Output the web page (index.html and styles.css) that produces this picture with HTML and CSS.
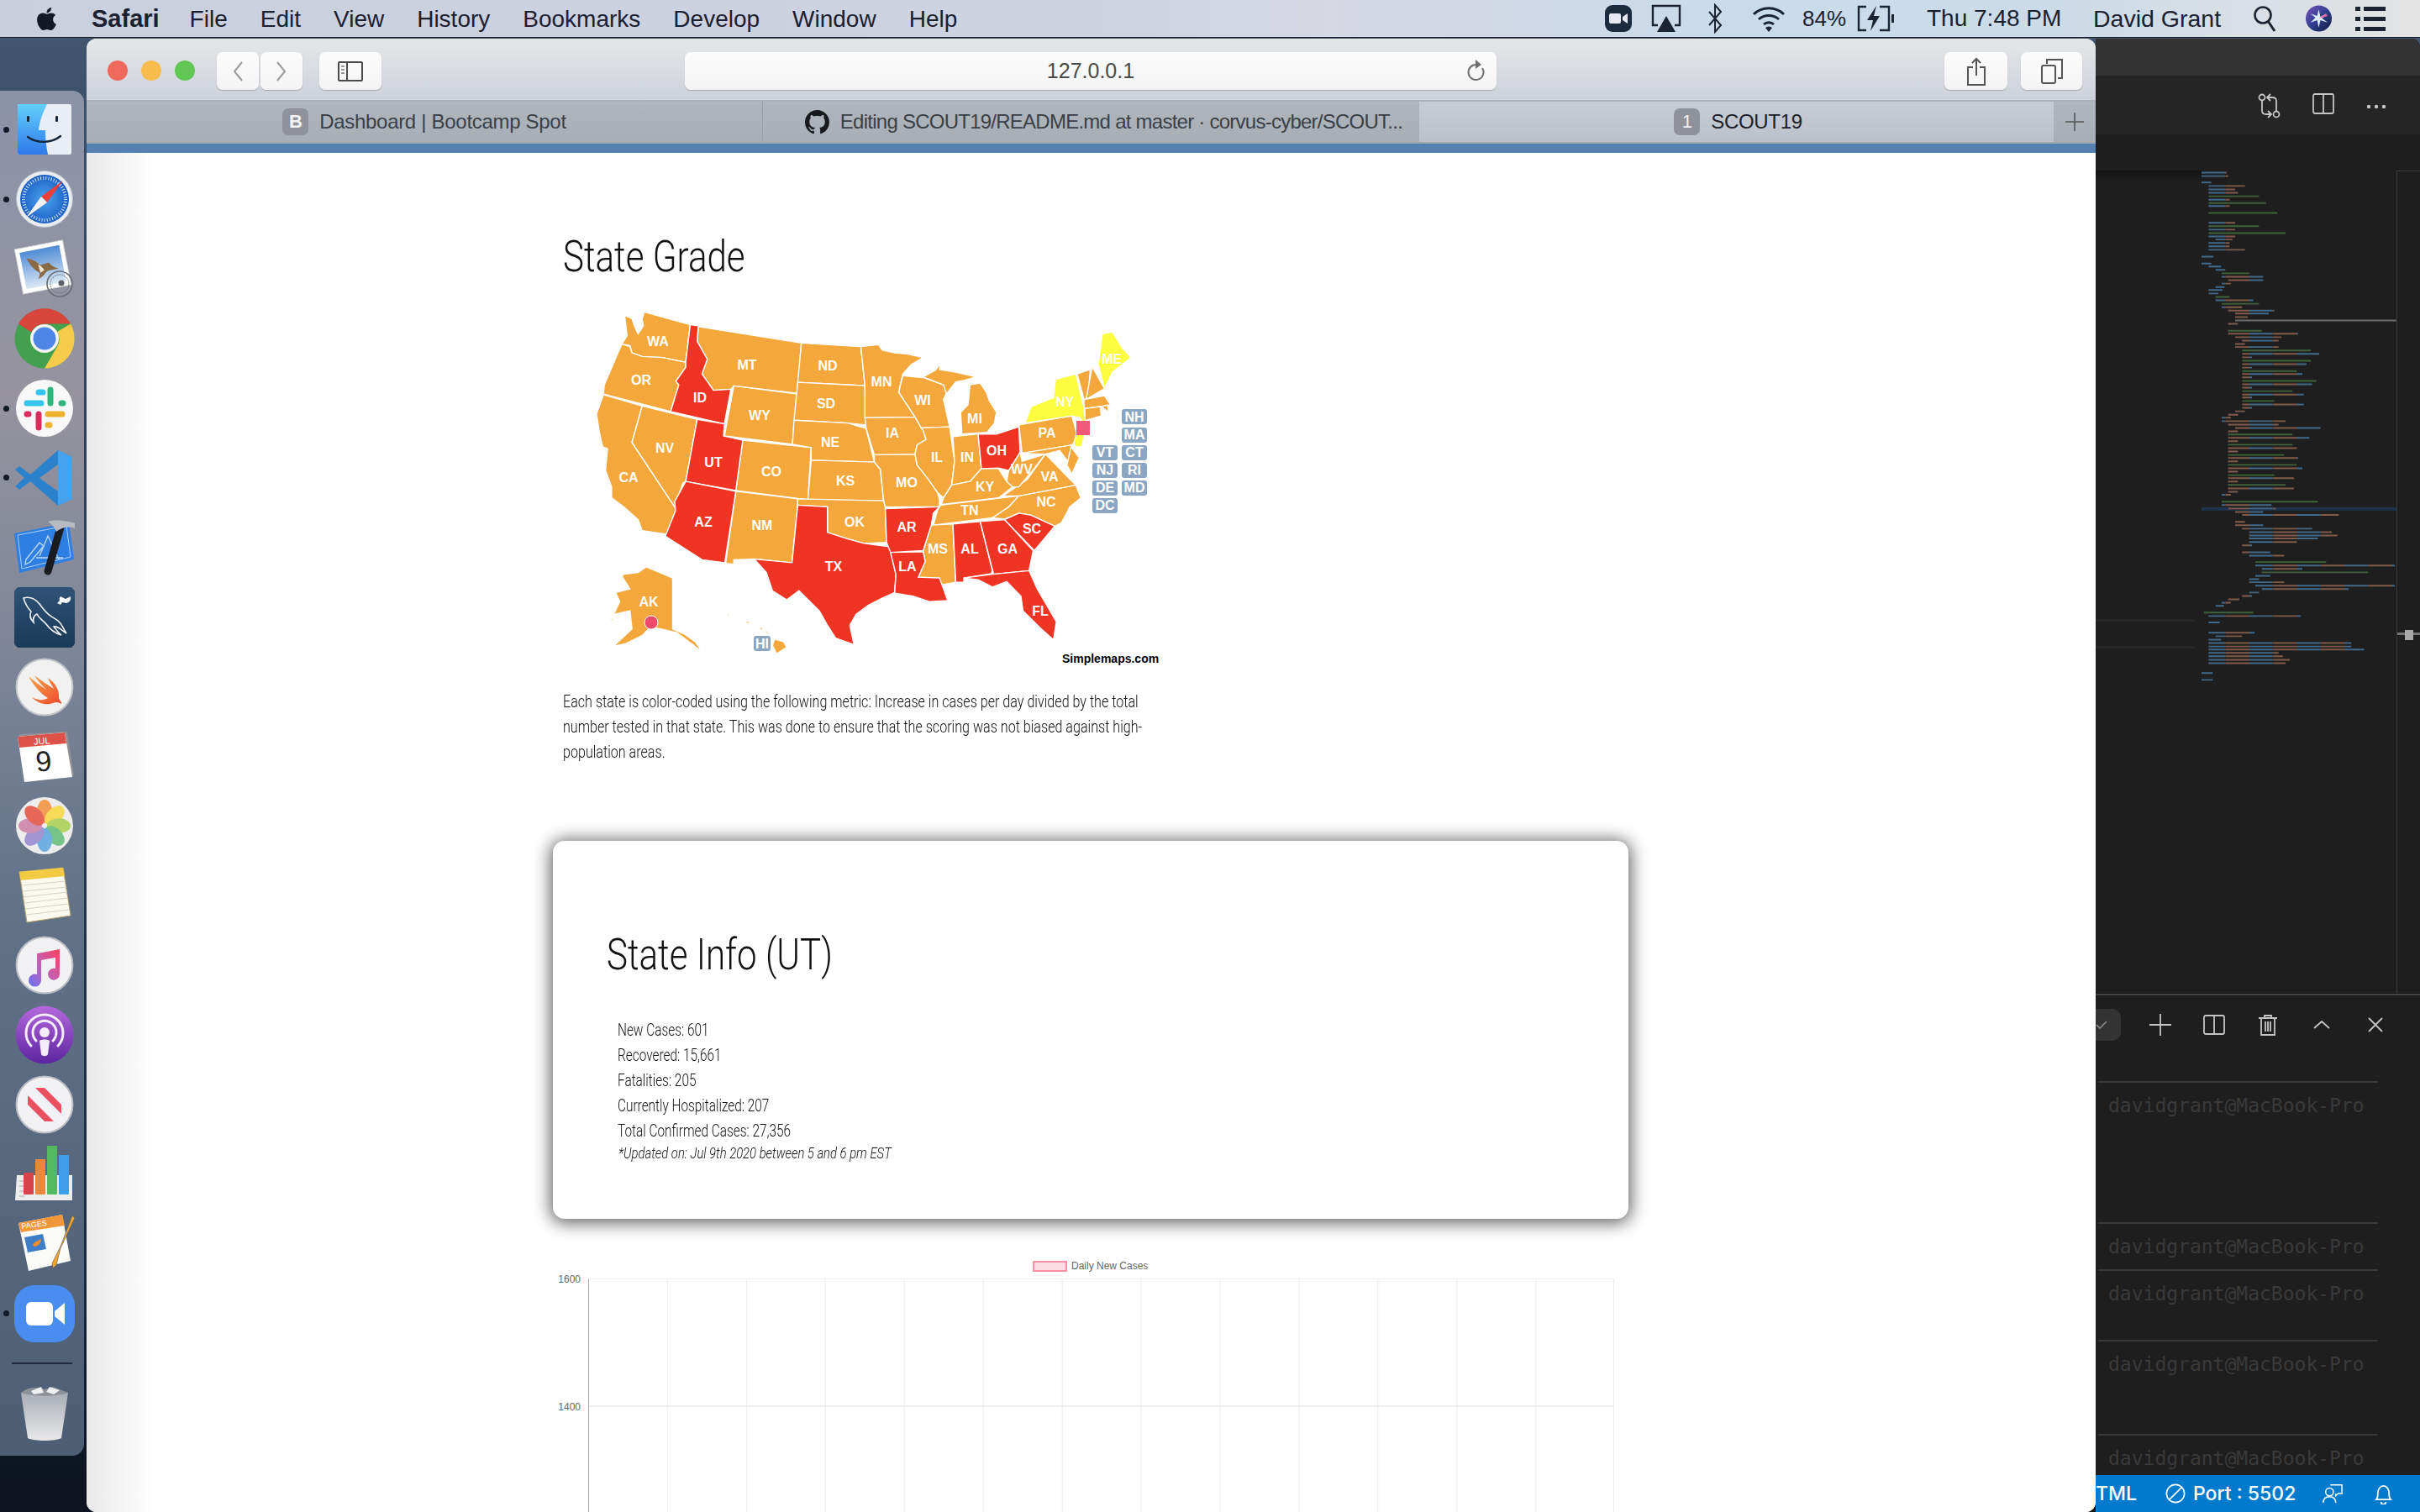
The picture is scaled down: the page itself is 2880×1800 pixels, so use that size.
FILE: index.html
```html
<!DOCTYPE html>
<html lang="en">
<head>
<meta charset="utf-8">
<title>SCOUT19</title>
<link rel="stylesheet" href="styles.css">
</head>
<body>
<header class="menubar">
  <svg class="apple" viewBox="3 3 18 18"><path d="M17.05 20.28c-.98.95-2.05.8-3.08.35-1.09-.46-2.09-.48-3.24 0-1.44.62-2.2.44-3.06-.35C2.79 15.25 3.51 7.59 9.05 7.31c1.35.07 2.29.74 3.08.8 1.18-.24 2.31-.93 3.57-.84 1.51.12 2.65.72 3.4 1.8-3.12 1.87-2.38 5.98.48 7.13-.57 1.5-1.31 2.99-2.54 4.09zM12.03 7.25c-.15-2.23 1.66-4.07 3.74-4.25.29 2.58-2.34 4.5-3.74 4.25z"/></svg>
  <nav class="menus"><b>Safari</b><span>File</span><span>Edit</span><span>View</span><span>History</span><span>Bookmarks</span><span>Develop</span><span>Window</span><span>Help</span></nav>
  <div class="status">
    <svg class="st-zoom" viewBox="0 0 32 32"><rect width="32" height="32" rx="9" fill="#1c2b3d"/><rect x="5" y="10" width="14" height="12" rx="2" fill="#e6eaf0"/><path d="M21 14l6-4v12l-6-4z" fill="#e6eaf0"/></svg>
    <svg class="st-air" viewBox="0 0 36 34"><path d="M8 25H2V2h32v23h-6" fill="none" stroke="#1b2433" stroke-width="2.4"/><path d="M18 14l11 19H7z" fill="#1b2433"/></svg>
    <svg class="st-bt" viewBox="0 0 20 36"><path d="M3 10l14 16-7 8V2l7 8L3 26" fill="none" stroke="#1b2433" stroke-width="2"/></svg>
    <svg class="st-wifi" viewBox="0 0 42 34"><g fill="none" stroke="#1b2433" stroke-width="3"><path d="M3 12a26 26 0 0 1 36 0"/><path d="M9 18a18 18 0 0 1 24 0"/><path d="M15 24a9 9 0 0 1 12 0"/></g><path d="M21 33l-4-5a6 6 0 0 1 8 0z" fill="#1b2433"/></svg>
    <span class="st-pct">84%</span>
    <svg class="st-bat" viewBox="0 0 46 32"><path d="M12 2H3v28h9M28 2h11v28H28" fill="none" stroke="#1b2433" stroke-width="2.4"/><rect x="42" y="11" width="3" height="10" fill="#1b2433"/><path d="M24 1L13 18h7l-3 13 11-18h-7z" fill="#1b2433"/></svg>
    <span class="st-time">Thu 7:48 PM</span>
    <span class="st-user">David Grant</span>
    <svg class="st-search" viewBox="0 0 28 32"><circle cx="12" cy="12" r="9.500" fill="none" stroke="#1b2433" stroke-width="2.6"/><path d="M18 19l8 12" stroke="#1b2433" stroke-width="3"/></svg>
    <svg class="st-siri" viewBox="0 0 32 32"><defs><linearGradient id="siriG" x1="0" y1="0" x2="1" y2="1"><stop offset="0" stop-color="#7c4fc0"/><stop offset=".5" stop-color="#2f3f8e"/><stop offset="1" stop-color="#111a3a"/></linearGradient></defs><circle cx="16" cy="16" r="16" fill="url(#siriG)"/><path d="M16 5l2 9 8-4-6 6 7 5-9-3-2 9-2-9-8 3 6-6-6-5 8 3z" fill="#dff0ff"/><path d="M16 16l8-6 3 3z" fill="#ef6aa8"/></svg>
    <svg class="st-list" viewBox="0 0 36 30"><g fill="#1b2433"><rect x="0" y="1" width="6" height="5"/><rect x="10" y="1" width="26" height="5"/><rect x="0" y="13" width="6" height="5"/><rect x="10" y="13" width="26" height="5"/><rect x="0" y="25" width="6" height="5"/><rect x="10" y="25" width="26" height="5"/></g></svg>
  </div>
</header>

<aside class="dock">
  <div class="dock-item running"><svg viewBox="0 0 72 72"><defs><linearGradient id="fb" x1="0" y1="0" x2="0" y2="1"><stop offset="0" stop-color="#63d0fb"/><stop offset="1" stop-color="#2f78ea"/></linearGradient></defs><rect x="4" y="6" width="64" height="60" rx="2" fill="#e8eef4"/><path d="M6 6h33c-5 10-9 20-10 31h8c0 10 1 20 3 29H6a2 2 0 0 1-2-2V8a2 2 0 0 1 2-2z" fill="url(#fb)"/><rect x="15" y="20" width="3" height="7" rx="1" fill="#14263a"/><rect x="49" y="20" width="3" height="7" rx="1" fill="#14263a"/><path d="M16 45c11 8 28 8 39-1" fill="none" stroke="#14263a" stroke-width="2.4" stroke-linecap="round"/></svg></div>
  <div class="dock-item running"><svg viewBox="0 0 72 72"><defs><radialGradient id="sb"><stop offset="0" stop-color="#4ba4ee"/><stop offset="1" stop-color="#1c5fc6"/></radialGradient></defs><circle cx="36" cy="36" r="33.500" fill="#e9edf1" stroke="#b9bec6"/><circle cx="36" cy="36" r="29" fill="url(#sb)"/><circle cx="36" cy="36" r="25" fill="none" stroke="#d5e6f8" stroke-width="4" stroke-dasharray="1 2.2"/><path d="M58 14L32 33l7 7z" fill="#ee3f3a"/><path d="M14 58l18-25 7 7z" fill="#f3f3f3"/></svg></div>
  <div class="dock-item"><svg viewBox="0 0 72 72"><defs><linearGradient id="ms" x1="0" y1="0" x2="0" y2="1"><stop offset="0" stop-color="#4f8bd6"/><stop offset="1" stop-color="#dbe8f4"/></linearGradient></defs><g transform="rotate(-11 34 34)"><rect x="5" y="7" width="58" height="54" fill="#fff" stroke="#ddd" stroke-dasharray="3 1"/><rect x="10" y="12" width="48" height="44" fill="url(#ms)"/><path d="M17 20c6 2 11 6 14 11l11-1c2 4 5 7 10 9-7 1-13-1-16 2-3 3-6 5-10 6 2-3 3-5 3-7-5-4-10-11-12-20z" fill="#8a6a44"/><path d="M29 30c3 2 5 5 6 8l-5 2z" fill="#efe6d2"/></g><circle cx="54" cy="54" r="15" fill="none" stroke="#6a6d74" stroke-width="1.600"/><circle cx="54" cy="54" r="11" fill="none" stroke="#6a6d74" stroke-width="1" stroke-dasharray="2 1"/><circle cx="56" cy="53" r="3.500" fill="#5f6168"/></svg></div>
  <div class="dock-item"><svg viewBox="0 0 72 72"><circle cx="36" cy="36" r="35.500" fill="#43a04f"/><path d="M67 18.500A35.500 35.500 0 0 1 36 71.500L52 44a18 18 0 0 0-1-16z" fill="#f8cc4b"/><path d="M5 18.500A35.500 35.500 0 0 1 67 18.500H36a18 18 0 0 0-16 10z" fill="#d8453a"/><circle cx="36" cy="36" r="17" fill="#f5f5f5"/><circle cx="36" cy="36" r="13.500" fill="#4e86e8"/></svg></div>
  <div class="dock-item running"><svg viewBox="0 0 72 72"><circle cx="36" cy="36" r="34" fill="#f8f8f8"/><g stroke-linecap="round" stroke-width="7" fill="none"><path d="M29 17h5M15 30h17" stroke="#36c5f0"/><path d="M43 14v16M56 30h2" stroke="#2eb67d"/><path d="M40 43h17M40 56h2" stroke="#ecb22e"/><path d="M29 43v16M15 43h2" stroke="#d92d5c"/></g></svg></div>
  <div class="dock-item running"><svg viewBox="0 0 72 72"><path fill-rule="evenodd" d="M52 3L19 32 6 22 1 26l11 10L1 46l5 4 13-10 33 29 17-8V11zM52 20L30 36l22 16z" fill="#2a82cd"/><path d="M52 3l17 8v50l-17 8z" fill="#45a2ee"/></svg></div>
  <div class="dock-item"><svg viewBox="0 0 72 72"><path d="M0 19L65 6l6 44L6 66z" fill="#2f7fe3"/><path d="M4 21l58-11 5 37L9 61z" fill="none" stroke="#a8cef7" stroke-width="1"/><g fill="none" stroke="#bfdcfb" stroke-width="1.300"><path d="M14 50l16-20 5 4-16 19-6 3z"/><path d="M30 46l10-24 13 28M26 48h32"/></g><path d="M55 12L40 64" stroke="#1a1c20" stroke-width="9" stroke-linecap="round"/><path d="M40 5C50 2 62 4 73 7l-1 6C64 10 56 12 50 17 48 12 45 8 40 5z" fill="#b8bcc2"/></svg></div>
  <div class="dock-item"><svg viewBox="0 0 72 72"><defs><linearGradient id="my" x1="0" y1="0" x2="0" y2="1"><stop offset="0" stop-color="#2f5377"/><stop offset="1" stop-color="#1b3857"/></linearGradient></defs><rect x="-1" y="-2" width="74" height="76" rx="12" fill="url(#my)"/><path d="M11 13c7-2 14 1 19 7 4 5 7 10 13 14 3 3 8 4 11 8 3 3 4 7 8 13-6-4-10-9-15-8 4 5 6 8 9 10-7-2-13-6-18-13-4-5-8-6-11-12-4 2-5 6-4 10-4-4-5-9-3-13-3-3-6-6-9-16z" fill="none" stroke="#f0f4f8" stroke-width="1.600"/><path d="M55 11l6 3 6-3c1 4-1 7-5 8l-5-1-2 3-4-2 3-3c-1-2 0-4 1-5z" fill="#f3f5f7"/></svg></div>
  <div class="dock-item"><svg viewBox="0 0 72 72"><defs><linearGradient id="sw" x1="0" y1="0" x2="1" y2="1"><stop offset="0" stop-color="#f7a44b"/><stop offset="1" stop-color="#ef4b2d"/></linearGradient></defs><circle cx="36" cy="36" r="33.500" fill="#f1f1f1" stroke="#bfc2c7" stroke-width="2"/><path d="M17 23c8 7 15 12 21 16-6-6-11-12-14-17 9 7 17 12 23 16-3-5-5-8-7-13 9 6 14 15 13 24 2 4 4 6 3 7-3-2-6-3-10-1-7 3-18 1-25-7 7 4 14 4 19 1-8-5-16-13-23-26z" fill="url(#sw)"/></svg></div>
  <div class="dock-item"><svg viewBox="0 0 72 72"><path d="M6 10l57-3 8 52-57 8z" fill="#8f9196"/><path d="M4 13l56-5 9 53-57 6z" fill="#fff"/><path d="M4 13l56-5 2 13-56 5z" fill="#dc5249"/><text class="cal-mon" x="33" y="22" transform="rotate(-5 33 22)">JUL</text><text class="cal-day" x="36" y="54" transform="rotate(-5 36 54)">9</text></svg></div>
  <div class="dock-item"><svg viewBox="0 0 72 72"><circle cx="36" cy="36" r="34" fill="#ededed"/><g opacity=".85"><ellipse cx="36" cy="19" rx="9" ry="14" fill="#f4913a"/><ellipse cx="48" cy="24" rx="9" ry="14" fill="#f7d83c" transform="rotate(45 48 24)"/><ellipse cx="53" cy="36" rx="14" ry="9" fill="#a9cf4e"/><ellipse cx="48" cy="48" rx="9" ry="14" fill="#62bd76" transform="rotate(-45 48 48)"/><ellipse cx="36" cy="53" rx="9" ry="14" fill="#5aa5df"/><ellipse cx="24" cy="48" rx="9" ry="14" fill="#9586cf" transform="rotate(45 24 48)"/><ellipse cx="19" cy="36" rx="14" ry="9" fill="#cd7fa9"/><ellipse cx="24" cy="24" rx="9" ry="14" fill="#e5503d" transform="rotate(-45 24 24)"/></g></svg></div>
  <div class="dock-item"><svg viewBox="0 0 72 72"><path d="M6 8l52-5 9 57-52 8z" fill="#fbfaf0" stroke="#b9a56a"/><path d="M6 8l52-5 2 10-52 5z" fill="#f3cb43"/><g stroke="#d6d3c3" stroke-width="1"><path d="M9 24l52-5M10 31l52-5M11 38l52-6M12 45l52-6M13 52l52-6M14 59l52-6"/></g></svg></div>
  <div class="dock-item"><svg viewBox="0 0 72 72"><defs><linearGradient id="mu" x1="1" y1="0" x2="0" y2="1"><stop offset="0" stop-color="#f5435c"/><stop offset=".5" stop-color="#c65fb3"/><stop offset="1" stop-color="#6672f2"/></linearGradient></defs><circle cx="36" cy="36" r="33.500" fill="#f2f2f4" stroke="#b8bcc2" stroke-width="2"/><path d="M28 22l26-5v30a7 7 0 1 1-5-7V27l-17 3v24a7.500 7.500 0 1 1-5-7V22z" fill="url(#mu)"/></svg></div>
  <div class="dock-item"><svg viewBox="0 0 72 72"><defs><linearGradient id="po" x1="0" y1="0" x2="0" y2="1"><stop offset="0" stop-color="#b568dd"/><stop offset="1" stop-color="#5b25a0"/></linearGradient></defs><circle cx="36" cy="36" r="34.500" fill="url(#po)"/><g fill="none" stroke="#f4ecfa" stroke-width="3" stroke-linecap="round"><path d="M20 49a22 22 0 1 1 32 0"/><path d="M26 43a14 14 0 1 1 20 0"/></g><circle cx="36" cy="33" r="6" fill="#f4ecfa"/><path d="M30 43c2-2 10-2 12 0l-2 16c-1 3-7 3-8 0z" fill="#f4ecfa"/></svg></div>
  <div class="dock-item"><svg viewBox="0 0 72 72"><circle cx="36" cy="36" r="33.500" fill="#f2f2f4" stroke="#b8bcc2" stroke-width="2"/><rect x="16" y="16" width="40" height="40" rx="1" fill="#ea5062"/><path d="M16 16h9l31 31v9h-9L16 25zM16 36l20 20H16zM36 16h20v20z" fill="#f2f2f4"/><path d="M16 16h8l32 32v8z" fill="#f2f2f4" opacity="0"/></svg></div>
  <div class="dock-item"><svg viewBox="0 0 72 72"><path d="M3 37h66v30H1z" fill="#eceeed"/><g stroke="#aaa" stroke-width="1"><path d="M6 44h6M6 50h6M6 56h6M6 62h6"/></g><rect x="11" y="34" width="12" height="26" rx="1" fill="#d9434c"/><rect x="25" y="18" width="12" height="42" rx="1" fill="#e9873b"/><rect x="39" y="2" width="12" height="58" rx="1" fill="#53b95f"/><rect x="53" y="13" width="12" height="47" rx="1" fill="#3f9ce9"/></svg></div>
  <div class="dock-item"><svg viewBox="0 0 72 72"><path d="M5 11L57 1l10 55-50 12z" fill="#fbfbf8"/><path d="M5 11L57 1l3 13-52 8z" fill="#f0973a"/><text class="pages-tag" x="9" y="18" transform="rotate(-8 9 18)">PAGES</text><path d="M12 28l22-4 4 18-22 4z" fill="#3d7ec6"/><path d="M22 37c3-5 7-5 10-7 0 4-2 8-8 9z" fill="#f08b2c"/><path d="M69 2l3 3-17 36-5 20-4 4-1-6 10-20z" fill="#f1a52d" stroke="#555" stroke-width=".6"/></svg></div>
  <div class="dock-item running"><svg viewBox="0 0 72 72"><rect width="72" height="68" y="2" rx="24" fill="#4a8df0"/><rect x="14" y="22" width="32" height="28" rx="6" fill="#fff"/><path d="M48 33l12-10v26L48 39z" fill="#fff"/></svg></div>
  <div class="dock-sep"></div>
  <div class="dock-item"><svg viewBox="0 0 72 72"><defs><linearGradient id="tr" x1="0" y1="0" x2="0" y2="1"><stop offset="0" stop-color="#a9aeb5"/><stop offset="1" stop-color="#e9e9ea"/></linearGradient></defs><path d="M8 12h56l-8 54c-7 4-33 4-40 0z" fill="url(#tr)"/><path d="M8 12c6-5 14-7 22-6l6 2 10-3 18 7c-15 5-41 5-56 0z" fill="#8d9096"/><path d="M20 10l12-5 3 7-12 2zM42 5l12 4-7 5-9-3z" fill="#eef0f2"/></svg></div>
</aside>

<section class="vscode">
  <div class="vs-title"></div>
  <div class="vs-tabs">
    <svg class="vs-ic" viewBox="0 0 28 30"><g fill="none" stroke="#c5c5c5" stroke-width="1.800"><circle cx="5" cy="5" r="3.500"/><circle cx="22" cy="25" r="3.500"/><path d="M5 9v12c0 3 2 4 5 4h5M12 21l4 4-4 4M22 21V9c0-3-2-4-5-4h-5M15 1l-4 4 4 4"/></g></svg>
    <svg class="vs-ic2" viewBox="0 0 26 25"><rect x="1" y="1" width="24" height="23" rx="2" fill="none" stroke="#c5c5c5" stroke-width="1.800"/><path d="M13 1v23" stroke="#c5c5c5" stroke-width="1.800"/></svg>
    <svg class="vs-ic3" viewBox="0 0 24 6"><g fill="#c5c5c5"><circle cx="3" cy="3" r="2.200"/><circle cx="12" cy="3" r="2.200"/><circle cx="21" cy="3" r="2.200"/></g></svg>
  </div>
  <div class="vs-editor">
    <div class="vs-gutter"><div class="vs-rule rule-a"></div><div class="vs-rule rule-b"></div></div>
    <svg class="vs-mini" viewBox="420 300 696 1200" preserveAspectRatio="none">
      <defs><pattern id="code" x="420" y="0" width="170" height="10" patternUnits="userSpaceOnUse"><rect width="85" height="10" fill="#4f86b4"/><rect x="85" width="85" height="10" fill="#a8725c"/></pattern></defs>
      <rect x="420" y="1086" width="696" height="8" fill="#1f3a5c"/>
      <path stroke="url(#code)" stroke-width="3.800" fill="none" d="M420 305h90M420 313h95M420 328h35M445 336h130M445 344h95M445 352h105M445 368h75M445 383h75M445 422h95M445 438h95M445 454h95M470 461h60M445 469h75M445 477h75M445 485h130M420 501h42M420 517h35M445 524h45M470 532h35M492 548h148M515 556h125M492 564h33M470 572h32M445 579h50M445 587h35M470 603h135M492 619h73M515 627h165M540 634h120M540 642h45M515 658h35M515 681h250M540 689h165M565 697h130M540 705h35M540 712h155M565 728h275M565 736h35M565 752h230M565 760h35M565 775h215M565 783h35M565 799h250M565 807h35M565 823h220M565 830h35M565 846h220M565 854h35M540 862h35M515 870h35M492 877h33M492 885h228M515 893h180M540 901h305M515 909h35M515 924h290M515 932h35M515 948h245M515 956h35M515 971h250M515 979h35M515 995h265M515 1003h35M515 1018h235M515 1026h35M515 1042h235M515 1050h35M492 1057h33M492 1081h178M515 1089h170M540 1097h100M565 1104h345M540 1120h35M540 1128h100M565 1136h250M590 1144h295M590 1152h315M590 1159h245M590 1167h170M565 1175h35M565 1191h100M590 1199h125M612 1222h498M635 1230h145M612 1246h53M590 1254h35M590 1261h125M612 1269h498M635 1277h310M590 1285h35M565 1293h35M515 1301h40M492 1309h33M470 1316h30M445 1340h330M445 1355h40M445 1379h165M470 1387h95M445 1395h45M445 1403h510M445 1411h510M445 1418h555M445 1426h250M445 1434h265M445 1442h290M445 1450h275M420 1473h40M420 1489h40"/>
      <path stroke="#8a8a8a" stroke-width="3.800" fill="none" d="M540 650h575"/>
      <path stroke="#4e7d45" stroke-width="3.800" fill="none" d="M445 360h180M445 376h205M445 399h245M445 430h180M445 446h275M492 540h98M470 595h50M492 611h133M515 674h120M565 720h245M565 744h245M565 768h195M565 791h265M565 815h180M565 838h115M515 916h230M515 940h230M515 964h200M515 987h245M515 1011h165M515 1034h205M492 1073h343M612 1214h253M635 1238h380M428 1332h177"/>
    </svg>
    <div class="vs-scroll"><div class="vs-mark"><span class="vs-thumb"></span></div></div>
  </div>
  <div class="vs-term">
    <div class="term-head">
      <div class="term-select"><svg viewBox="0 0 14 10"><path d="M1 5l4 4 8-8" fill="none" stroke="#8a8a8a" stroke-width="1.600"/></svg></div>
      <svg class="term-ic" viewBox="0 0 28 28"><path d="M14 1v26M1 14h26" stroke="#c5c5c5" stroke-width="1.800"/></svg>
      <svg class="term-ic" viewBox="0 0 28 28"><rect x="2" y="3" width="24" height="22" rx="2" fill="none" stroke="#c5c5c5" stroke-width="1.800"/><path d="M14 3v22" stroke="#c5c5c5" stroke-width="1.800"/></svg>
      <svg class="term-ic" viewBox="0 0 28 28"><path d="M3 6h22M10 6V3h8v3M6 6v20h16V6M11 10v12M14 10v12M17 10v12" fill="none" stroke="#c5c5c5" stroke-width="1.800"/></svg>
      <svg class="term-ic" viewBox="0 0 28 28"><path d="M5 18l9-8 9 8" fill="none" stroke="#c5c5c5" stroke-width="1.800"/></svg>
      <svg class="term-ic" viewBox="0 0 28 28"><path d="M6 6l16 16M22 6L6 22" fill="none" stroke="#c5c5c5" stroke-width="1.800"/></svg>
    </div>
<pre class="term-text"><span class="rule">────────────────────────</span>
davidgrant@MacBook-Pro




<span class="rule">────────────────────────</span>
davidgrant@MacBook-Pro
<span class="rule">────────────────────────</span>
davidgrant@MacBook-Pro

<span class="rule">────────────────────────</span>
davidgrant@MacBook-Pro


<span class="rule">────────────────────────</span>
davidgrant@MacBook-Pro</pre>
  </div>
  <footer class="vs-status">
    <span class="vs-lang">TML</span>
    <svg class="vs-no" viewBox="0 0 26 26"><circle cx="13" cy="13" r="11.500" fill="none" stroke="#fff" stroke-width="1.800"/><path d="M5 21L21 5" stroke="#fff" stroke-width="1.800"/></svg>
    <span class="vs-port">Port : 5502</span>
    <svg class="vs-fb" viewBox="0 0 26 26"><g fill="none" stroke="#fff" stroke-width="1.600"><circle cx="9" cy="11" r="5"/><path d="M1 25c0-5 3-8 8-8s8 3 8 8M10 2h15v11h-5l-3 3v-3"/></g></svg>
    <svg class="vs-bell" viewBox="0 0 22 26"><path d="M2 20c2-2 2-4 2-8 0-5 3-9 7-9s7 4 7 9c0 4 0 6 2 8zM8 23a3 3 0 0 0 6 0" fill="none" stroke="#fff" stroke-width="1.800"/></svg>
  </footer>
</section>

<main class="safari">
  <div class="toolbar">
    <span class="light red"></span><span class="light yellow"></span><span class="light green"></span>
    <div class="btn nav-back"><svg viewBox="0 0 14 26"><path d="M12 2L3 13l9 11" fill="none" stroke="#9a9a9a" stroke-width="2"/></svg></div>
    <div class="btn nav-fwd"><svg viewBox="0 0 14 26"><path d="M2 2l9 11-9 11" fill="none" stroke="#9a9a9a" stroke-width="2"/></svg></div>
    <div class="btn side"><svg viewBox="0 0 30 24"><rect x="1" y="1" width="28" height="22" rx="1" fill="none" stroke="#4a4a4a" stroke-width="2"/><path d="M11 1v22" stroke="#4a4a4a" stroke-width="2"/><path d="M4 6h4M4 10h4M4 14h4" stroke="#777" stroke-width="1.600"/></svg></div>
    <div class="url"><span>127.0.0.1</span><svg viewBox="0 0 24 28"><path d="M19 11a9 9 0 1 1-7-4" fill="none" stroke="#707070" stroke-width="2"/><path d="M11 1l7 6-7 5z" fill="#707070"/></svg></div>
    <div class="btn share"><svg viewBox="0 0 24 34"><path d="M8 12H2v21h20V12h-6M12 22V2M7 7l5-5 5 5" fill="none" stroke="#555" stroke-width="2"/></svg></div>
    <div class="btn tabsbtn"><svg viewBox="0 0 28 30"><path d="M8 6V1h18v22h-5" fill="none" stroke="#555" stroke-width="2"/><rect x="2" y="8" width="16" height="21" rx="2" fill="none" stroke="#555" stroke-width="2"/></svg></div>
  </div>
  <div class="tabs">
    <div class="tab"><span class="fav">B</span><span>Dashboard | Bootcamp Spot</span></div>
    <div class="tab tab-mid"><svg class="gh" viewBox="0 0 16 16"><path d="M8 0C3.580 0 0 3.580 0 8c0 3.540 2.290 6.530 5.470 7.590.4.070.55-.17.55-.38 0-.19-.01-.82-.01-1.490-2.010.37-2.530-.49-2.690-.94-.09-.23-.48-.94-.82-1.130-.28-.15-.68-.52-.01-.53.63-.01 1.080.58 1.230.82.72 1.210 1.870.87 2.330.66.07-.52.28-.87.51-1.070-1.780-.2-3.640-.89-3.640-3.950 0-.87.31-1.590.82-2.150-.08-.2-.36-1.020.08-2.120 0 0 .67-.21 2.200.82.64-.18 1.320-.27 2-.27.68 0 1.360.09 2 .27 1.530-1.040 2.200-.82 2.200-.82.44 1.100.16 1.920.08 2.120.51.56.82 1.270.82 2.150 0 3.070-1.870 3.750-3.650 3.950.29.25.54.73.54 1.480 0 1.070-.01 1.930-.01 2.200 0 .21.15.46.55.38A8.013 8.013 0 0 0 16 8c0-4.420-3.580-8-8-8z"/></svg><span>Editing SCOUT19/README.md at master · corvus-cyber/SCOUT...</span></div>
    <div class="tab tab-active"><span class="fav">1</span><span>SCOUT19</span></div>
    <div class="tab tab-plus"><svg viewBox="0 0 22 22"><path d="M11 0v22M0 11h22" stroke="#555" stroke-width="1.600"/></svg></div>
  </div>
  <div class="tabline"></div>
  <div class="page">
    <section class="grade">
      <h2 class="cond title">State Grade</h2>
      <svg class="map" viewBox="40 120 700 440">
        <g transform="scale(.4847 .4337)" class="states">
          <g class="or">
            <path d="M172 290L190 298 196 318 205 340 218 318 215 300 220 280 333 315 322 418 265 405 215 402 190 392 185 372 165 368 178 345z"/>
            <path d="M165 368L185 375 190 392 215 402 265 405 322 418 322 432 298 470 305 480 285 553 120 505 122 480 145 420z"/>
            <path d="M120 507L215 538 190 638 295 815 297 825 275 890 215 880 205 850 170 815 140 790 140 760 125 715 130 655 118 650 110 610 103 560z"/>
            <path d="M215 538L350 575 322 745 315 750 295 815 190 638z"/>
            <path d="M353 320L606 365 597 503 440 483 433 492 390 495 362 450 375 410 350 360z"/>
            <path d="M440 483L595 505 584 643 417 620z"/>
            <path d="M462 632L630 652 622 795 445 770z"/>
            <path d="M445 772L597 793 597 810 583 968 490 958 440 960 440 972 420 970z"/>
            <path d="M606 365L752 375 762 482 597 473z"/>
            <path d="M597 473L762 482 765 590 720 585 588 577z"/>
            <path d="M588 577L720 585 765 600 785 692 630 687 630 652 584 643z"/>
            <path d="M630 687L785 692 800 712 808 798 622 795z"/>
            <path d="M597 793L808 798 812 815 815 912 760 915 720 903 670 885 670 815 597 810z"/>
            <path d="M785 672L885 670 890 700 915 735 940 775 945 795 945 815 812 815 808 798 800 712 785 692z"/>
            <path d="M762 570L885 568 905 605 912 630 890 645 885 670 785 672 765 600z"/>
            <path d="M752 375L795 370 805 385 835 392 865 395 905 405 875 425 855 450 845 500 885 568 762 570 762 482z"/>
            <path d="M855 455L905 460 955 480 975 470 955 520 970 595 900 598 885 568 845 500z"/>
            <path d="M900 598L970 595 982 690 975 755 955 790 940 775 915 735 890 700 885 670 890 645 912 630 905 605z"/>
            <path d="M1000 615L997 555 1015 535 1020 480 1045 475 1060 500 1068 525 1085 555 1080 585 1062 610z"/>
            <path d="M905 458L935 440 948 420 945 438 985 445 1035 458 1005 468 985 472 962 505 955 480z"/>
            <path d="M978 622L1040 615 1048 710 1020 745 975 755 982 690z"/>
            <path d="M975 755L1020 745 1048 710 1090 710 1110 745 1125 760 1090 790 975 805 950 808 955 790z"/>
            <path d="M948 810L1140 785 1115 815 1075 845 930 865 940 825z"/>
            <path d="M925 865L978 862 985 1022 945 1030 945 1010 893 1008 910 965 905 935z"/>
            <path d="M1140 785L1280 755 1292 790 1265 815 1245 858 1228 868 1170 838 1140 832 1105 848 1075 845 1115 815z"/>
            <path d="M1100 785L1160 740 1205 670 1240 710 1262 735 1280 755 1140 785z"/>
            <path d="M1115 715L1143 665 1148 690 1205 670 1170 720 1140 760 1125 760 1110 745z"/>
            <path d="M1140 590L1270 565 1285 625 1270 645 1148 668z"/>
            <path d="M1148 668L1270 645 1285 690 1260 690 1240 660 1205 670z"/>
            <path d="M1268 650L1288 680 1270 725 1258 700z"/>
            <path d="M1283 450L1315 438 1310 520 1300 520z"/>
            <path d="M1320 430L1350 490 1305 520z"/>
            <path d="M1300 520L1350 510 1365 535 1300 545z"/>
            <path d="M1302 545L1340 540 1342 565 1302 578z"/>
            <path d="M1343 540L1358 535 1360 555z"/>
            <path d="M170 1000L205 995 225 980 290 1010 290 1150 320 1165 345 1185 365 1215 300 1160 260 1150 235 1145 215 1168 175 1190 145 1197 190 1150 185 1100 145 1110 160 1075 150 1050 185 1040 165 1005z"/>
            <path d="M115 1212l25-6-2 3zM135 1125l8-4 2 6zM335 1190l6 4-2 5zM350 1205l8 2-2 6zM420 1105l12 2-6 6zM468 1125l12 8-8 3zM498 1143l14 5-4 6zM515 1152l15 8-12 0zM540 1178L562 1185 570 1200 545 1218 535 1195z"/>
          </g>
          <g class="rd">
            <path d="M333 315L353 318 350 360 375 410 362 450 390 495 433 492 417 587 285 553 305 480 298 470 322 432 322 418z"/>
            <path d="M350 575L417 587 415 620 462 632 445 770 322 745z"/>
            <path d="M322 745L445 772 418 968 362 960 272 895 297 825 295 800z"/>
            <path d="M597 810L670 815 670 885 720 903 760 915 825 925 825 940 838 1000 835 1050 805 1065 770 1085 740 1110 725 1140 735 1193 690 1175 670 1140 650 1100 600 1045 570 1070 535 1045 520 995 490 958 583 968z"/>
            <path d="M825 940L905 938 910 965 893 1008 945 1010 955 1040 965 1072 920 1075 880 1060 835 1052 838 1000z"/>
            <path d="M812 820L945 815 930 832 925 865 905 935 825 940 815 912z"/>
            <path d="M1040 615L1085 615 1140 595 1143 665 1115 715 1090 708 1048 710z"/>
            <path d="M978 862L1045 855 1075 990 1072 998 1005 1010 1005 1022 985 1022z"/>
            <path d="M1045 855L1105 850 1175 935 1165 990 1078 1000z"/>
            <path d="M1105 850L1140 832 1170 838 1228 868 1178 935z"/>
            <path d="M1005 1010L1075 1000 1165 990 1185 1040 1232 1130 1225 1180 1195 1150 1150 1100 1145 1060 1110 1020 1075 1035 1040 1015z"/>
          </g>
          <g class="yl">
            <path d="M1170 540L1225 515 1230 465 1280 450 1300 545 1305 600 1290 570 1270 565 1155 585z"/>
            <path d="M1285 600L1300 620 1295 650 1280 650 1275 640z"/>
            <path d="M1345 340L1370 335 1395 380 1415 405 1370 445 1350 490 1335 425z"/>
          </g>
        </g>
        <g class="labels">
          <text x="123" y="162">WA</text><text x="103" y="208">OR</text><text x="88" y="324">CA</text><text x="131" y="289">NV</text><text x="173" y="229">ID</text><text x="229" y="190">MT</text><text x="244" y="250">WY</text><text x="189" y="306">UT</text><text x="258" y="317">CO</text><text x="177" y="377">AZ</text><text x="247" y="381">NM</text><text x="325" y="191">ND</text><text x="323" y="236">SD</text><text x="328" y="282">NE</text><text x="346" y="328">KS</text><text x="357" y="377">OK</text><text x="332" y="430">TX</text><text x="389" y="210">MN</text><text x="402" y="271">IA</text><text x="419" y="330">MO</text><text x="419" y="383">AR</text><text x="420" y="430">LA</text><text x="456" y="409">MS</text><text x="494" y="409">AL</text><text x="539" y="409">GA</text><text x="568" y="385">SC</text><text x="578" y="483">FL</text><text x="494" y="363">TN</text><text x="512" y="335">KY</text><text x="455" y="300">IL</text><text x="491" y="300">IN</text><text x="438" y="232">WI</text><text x="500" y="254">MI</text><text x="526" y="292">OH</text><text x="556" y="314">WV</text><text x="589" y="323">VA</text><text x="585" y="353">NC</text><text x="586" y="271">PA</text><text x="607" y="234">NY</text><text x="663" y="183">ME</text><text x="112" y="472">AK</text>
        </g>
        <g class="boxes">
          <rect x="675" y="237" width="30" height="18" rx="3"/><rect x="675" y="259" width="30" height="18" rx="3"/><rect x="640" y="280" width="30" height="18" rx="3"/><rect x="675" y="280" width="30" height="18" rx="3"/><rect x="640" y="301" width="30" height="18" rx="3"/><rect x="675" y="301" width="30" height="18" rx="3"/><rect x="640" y="322" width="30" height="18" rx="3"/><rect x="675" y="322" width="30" height="18" rx="3"/><rect x="640" y="343" width="30" height="18" rx="3"/><rect x="237" y="507" width="20" height="18" rx="3"/>
        </g>
        <g class="labels">
          <text x="690" y="252">NH</text><text x="690" y="273">MA</text><text x="655" y="294">VT</text><text x="690" y="294">CT</text><text x="655" y="315">NJ</text><text x="690" y="315">RI</text><text x="655" y="336">DE</text><text x="690" y="336">MD</text><text x="655" y="357">DC</text><text x="247" y="522">HI</text>
        </g>
        <rect x="621" y="251" width="16" height="17" fill="#ef5b7a"/>
        <circle cx="115" cy="491" r="8" fill="#ee4a6b" stroke="#fff" stroke-width="1"/>
        <text class="credit" x="604" y="539">Simplemaps.com</text>
      </svg>
      <p class="cond blurb">Each state is color-coded using the following metric: Increase in cases per day divided by the total<br>number tested in that state. This was done to ensure that the scoring was not biased against high-<br>population areas.</p>
    </section>
    <section class="card">
      <h2 class="cond title">State Info (UT)</h2>
      <ul class="facts">
        <li class="cond">New Cases: 601</li>
        <li class="cond">Recovered: 15,661</li>
        <li class="cond">Fatalities: 205</li>
        <li class="cond">Currently Hospitalized: 207</li>
        <li class="cond">Total Confirmed Cases: 27,356</li>
      </ul>
      <p class="cond updated">*Updated on: Jul 9th 2020 between 5 and 6 pm EST</p>
    </section>
    <section class="chart">
      <div class="legend"><span class="swatch"></span><span>Daily New Cases</span></div>
      <div class="plot">
        <div class="yaxis"><span>1600</span><span>1400</span></div>
        <div class="gridlines"></div>
      </div>
    </section>
  </div>
</main>
</body>
</html>
```

FILE: styles.css
```css
* { box-sizing: border-box; }
html, body { margin: 0; height: 100%; }
body {
  width: 2880px; height: 1800px; position: relative; overflow: hidden;
  font-family: "Liberation Sans", Arial, sans-serif;
  background: linear-gradient(180deg, #455872 0, #34465f 300px, #1a2a40 1500px, #0b1420 1760px);
}
svg { display: block; }

/* menu bar */
.menubar {
  height: 45px; display: flex; align-items: center; padding-left: 42px;
  background: linear-gradient(90deg, #c8cfdd 0, #ced3e1 45%, #d6d8e4 55%, #c9dbea 72%, #ccdbe8 85%, #e3e3e3 100%);
  border-bottom: 1px solid #1a1d22; color: #1a2030; font-size: 28px;
}
.apple { width: 27px; height: 31px; fill: #121826; }
.menus { display: flex; align-items: baseline; gap: 39px; margin-left: 40px; }
.menus b { font-size: 29px; margin-right: -3px; }
.status { display: flex; align-items: center; position: absolute; left: 1910px; top: 0; height: 44px; }
.st-zoom { width: 32px; height: 32px; }
.st-air { width: 36px; height: 34px; margin-left: 23px; }
.st-bt { width: 20px; height: 36px; margin-left: 30px; }
.st-wifi { width: 42px; height: 34px; margin-left: 33px; }
.st-pct { font-size: 26px; margin-left: 19px; width: 57px; white-space: nowrap; }
.st-bat { width: 46px; height: 32px; margin-left: 7px; }
.st-time { margin-left: 38px; width: 168px; font-size: 28px; white-space: nowrap; }
.st-user { margin-left: 30px; width: 160px; font-size: 28.500px; white-space: nowrap; }
.st-search { width: 28px; height: 32px; margin-left: 30px; }
.st-siri { width: 31px; height: 32px; margin-left: 35px; }
.st-list { width: 36px; height: 30px; margin-left: 28px; }

/* dock */
.dock {
  position: absolute; left: 0; top: 108px; width: 100px; height: 1625px;
  padding: 5px 0 0 17px; border-radius: 0 14px 14px 0;
  background: linear-gradient(180deg, #8b93a9 0, #96939f 22%, #7c8597 42%, #5f7087 62%, #4d5e74 100%);
  display: flex; flex-direction: column;
}
.dock-item { height: 82.900px; width: 72px; display: flex; align-items: center; position: relative; flex: none; }
.dock-item svg { width: 72px; height: 72px; }
.running::before {
  content: ""; position: absolute; left: -13px; top: 38px; width: 7px; height: 7px;
  border-radius: 50%; background: #121a28;
}
.dock-sep { height: 2px; width: 72px; margin: 17px 0 17px -3px; background: #1f2a40; flex: none; }
.cal-mon { font: 11px "Liberation Sans", sans-serif; fill: #fff; text-anchor: middle; }
.cal-day { font: 34px "Liberation Sans", sans-serif; fill: #222; text-anchor: middle; }
.pages-tag { font: 9px "Liberation Sans", sans-serif; fill: #fff; }

/* vs code window */
.vscode {
  position: absolute; left: 2494px; top: 46px; width: 386px; height: 1754px;
  display: flex; flex-direction: column; background: #1e1e1e; border-radius: 0 10px 0 0; overflow: hidden;
}
.vs-title { height: 44px; background: #333; flex: none; }
.vs-tabs { height: 70px; background: #252526; flex: none; display: flex; align-items: flex-start; padding: 21px 0 0 193px; }
.vs-ic { width: 28px; height: 30px; }
.vs-ic2 { width: 26px; height: 25px; margin-left: 37px; }
.vs-ic3 { width: 24px; height: 6px; margin: 13px 0 0 38px; }
.vs-editor { height: 1025px; flex: none; display: flex; padding-top: 43px; border-bottom: 2px solid #424242; }
.vs-gutter { width: 126px; flex: none; padding-top: 534px; background: linear-gradient(180deg, #141414 0, #1e1e1e 14px); }
.vs-rule { height: 3px; width: 118px; background: #262626; }
.rule-b { margin-top: 29px; }
.vs-mini { width: 232px; height: 612px; flex: none; opacity: .72; filter: blur(.5px); }
.vs-scroll { width: 28px; flex: none; border-left: 1px solid #3a3a3a; border-top: 1px solid #3a3a3a; padding-top: 549px; }
.vs-mark { height: 3px; background: #777; position: relative; }
.vs-thumb { position: absolute; left: 9px; top: -3px; width: 10px; height: 12px; background: #a8a8a8; }
.vs-term { flex: 1; min-height: 0; overflow: hidden; }
.term-head { display: flex; align-items: center; padding-top: 15px; height: 54px; }
.term-select { width: 30px; height: 38px; background: #333; border-radius: 0 10px 10px 0; display: flex; align-items: center; }
.term-select svg { width: 14px; height: 10px; }
.term-ic { width: 28px; height: 28px; margin-left: 36px; }
.term-select + .term-ic { margin-left: 33px; }
.term-text {
  margin: 35px 0 0; padding-left: 15px; color: #3a3a3a;
  font: 23px/28px "DejaVu Sans Mono", monospace;
}
.rule { display: inline-block; margin-left: -12px; }
.vs-status {
  height: 44px; flex: none; background: #007acc; color: #fff; display: flex; align-items: center;
  font: 500 23px Inter, sans-serif;
}
.vs-lang { width: 83px; }
.vs-no { width: 24px; height: 24px; }
.vs-port { margin-left: 9px; width: 154px; white-space: nowrap; }
.vs-fb { width: 24px; height: 24px; }
.vs-bell { width: 21px; height: 25px; margin-left: 38px; }

/* safari window */
.safari {
  position: absolute; left: 103px; top: 46px; width: 2391px; height: 1754px;
  display: flex; flex-direction: column; border-radius: 12px; overflow: hidden; background: #fff;
}
.toolbar {
  height: 75px; flex: none; display: flex; align-items: flex-start; padding: 16px 0 0 25px;
  background: linear-gradient(180deg, #e5e7e7 0, #cdd1da 100%); border-bottom: 2px solid #adb1b8;
}
.light { width: 24px; height: 24px; border-radius: 50%; margin: 10px 16px 0 0; }
.red { background: #f0695d; }
.yellow { background: #f7bc4c; }
.green { background: #62c655; margin-right: 26px; }
.btn, .url {
  height: 45px; border-radius: 7px; background: linear-gradient(180deg, #fcfcfc, #f4f4f4);
  box-shadow: 0 1px 1px #a3a5a9; display: flex; align-items: center; justify-content: center; flex: none;
}
.nav-back, .nav-fwd { width: 50px; }
.nav-back svg, .nav-fwd svg { width: 14px; height: 26px; }
.nav-fwd { margin-left: 2px; }
.side { width: 74px; margin-left: 20px; }
.side svg { width: 30px; height: 24px; }
.url { width: 966px; margin-left: 361px; position: relative; font-size: 25px; color: #4a4a4a; }
.url svg { position: absolute; right: 12px; top: 8px; width: 24px; height: 28px; }
.share { width: 75px; margin-left: 533px; }
.share svg { width: 24px; height: 34px; }
.tabsbtn { width: 73px; margin-left: 16px; }
.tabsbtn svg { width: 28px; height: 30px; }
.tabs {
  height: 50px; flex: none; display: grid; grid-template-columns: 804px 782px 755px 50px;
  background: linear-gradient(180deg, #b2b6be, #a7aeb6); border-bottom: 2px solid #a3a8ae;
  font-size: 24px; letter-spacing: -.3px; color: #3a3f47;
}
.tab { display: flex; align-items: center; justify-content: center; gap: 13px; white-space: nowrap; }
.tab-mid { border-left: 1px solid #989fa7; letter-spacing: -.75px; padding-left: 30px; }
.tab-active { background: linear-gradient(180deg, #c7cdd7, #b9c1cb); color: #1c2029; padding-left: 4px; }
.tab-plus svg { width: 22px; height: 22px; }
.fav {
  width: 31px; height: 32px; border-radius: 7px; background: #8f929b; color: #f1f1f1; font-weight: 700;
  font-size: 22px; display: flex; align-items: center; justify-content: center;
}
.tab-active .fav { font-weight: 400; }
.gh { width: 29px; height: 29px; fill: #17191d; }
.tabline { height: 11px; flex: none; background: #5480b2; box-shadow: 0 1px 2px #999; }
.page {
  flex: 1; min-height: 0; overflow: hidden; padding-left: 555px;
  background: linear-gradient(90deg, #e9e9e9 0, #fff 80px);
}

/* condensed copy */
.cond {
  display: block; width: max-content; white-space: nowrap; transform-origin: 0 0;
  font-family: Roboto, "Liberation Sans", sans-serif; font-weight: 300; color: #111;
}
.title { margin: 0; font-size: 52px; line-height: 60px; font-weight: 300; transform: scaleX(.81); }
.grade { padding: 94px 0 0 12px; }
.map { width: 700px; height: 440px; margin: 34px 0 0 30px; }
.states path { stroke: #fff; stroke-width: 3; }
.or { fill: #f4a73b; }
.rd { fill: #ef3423; }
.yl { fill: #fdfd3f; }
.labels text { font: 700 16px "Liberation Sans", sans-serif; fill: #fff; text-anchor: middle; }
.boxes rect { fill: #8ba6c2; }
.credit { font: 700 14px "Liberation Sans", sans-serif; fill: #000; }
.blurb { margin: 10px 0 0; font-size: 21px; line-height: 30px; transform: scaleX(.767); }
.card {
  width: 1280px; height: 450px; margin-top: 91px; padding: 106px 0 0 64px;
  background: #fff; border-radius: 14px; box-shadow: 0 2px 20px 3px rgba(0,0,0,.62);
}
.facts { list-style: none; margin: 44px 0 0; padding: 0 0 0 13px; }
.facts li { font-size: 20.500px; line-height: 30px; transform: scaleX(.75); }
.updated { margin: 0 0 0 14px; font-size: 19px; line-height: 24px; font-style: italic; transform: scaleX(.78); }
.chart { width: 1263px; margin-top: 49px; }
.legend { display: flex; align-items: center; gap: 5px; height: 14px; margin-left: 571px; font-size: 12px; color: #666; }
.swatch { width: 41px; height: 13px; background: #fbdde3; border: 2px solid #f88fa5; }
.plot { display: flex; margin-top: 8px; }
.yaxis { width: 33px; margin-top: -7px; font-size: 12px; color: #666; text-align: right; flex: none; }
.yaxis span { display: block; height: 152px; line-height: 16px; }
.gridlines {
  width: 1222px; height: 500px; margin-left: 9px;
  border-left: 1px solid #aaa; border-top: 1px solid #eee; border-right: 1px solid #ececec;
  background:
    linear-gradient(90deg, #ececec 1px, transparent 1px) -1px 0 / 93.94px 100%,
    linear-gradient(180deg, transparent 150px, #eee 150px, #eee 152px) 0 0 / 100% 152px;
}
```
